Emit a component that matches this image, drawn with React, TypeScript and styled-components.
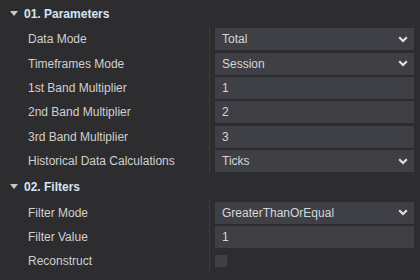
import React from "react";
import styled, { createGlobalStyle } from "styled-components";

const Global = createGlobalStyle`
  html, body { margin: 0; padding: 0; background: #2d2d30; }
  body { font-family: "Liberation Sans", Arial, sans-serif; font-size: 12px; color: #d2d2d2; }
`;

const Grid = styled.div`
  width: 420px;
  height: 280px;
  background: #2d2d30;
  overflow: hidden;
`;

const Header = styled.div`
  height: 27px;
  display: flex;
  align-items: center;
  padding-left: 10px;
  gap: 6px;
  font-weight: bold;
  color: #d6e4f4;
`;

const Caret = styled.svg`
  width: 8px;
  height: 5px;
  flex: none;
`;

const Rows = styled.div`
  display: flex;
  flex-direction: column;
`;

const Row = styled.div`
  height: 24.4px;
  display: grid;
  grid-template-columns: 209px 1px 1fr;
  align-items: center;
`;

const Label = styled.div`
  padding-left: 28px;
  color: #d0d0d0;
  white-space: nowrap;
`;

const Divider = styled.div`
  align-self: stretch;
  background: #3a3a3f;
`;

const Cell = styled.div`
  padding: 0 6px 0 5px;
  display: flex;
  align-items: center;
`;

const Field = styled.div`
  flex: 1;
  height: 22px;
  background: #3f3f46;
  display: flex;
  align-items: center;
  justify-content: space-between;
  padding: 0 6px 0 7px;
  color: #d6d6d6;
`;

const Chevron = styled.svg`
  width: 10px;
  height: 7px;
`;

const Check = styled.div`
  width: 12px;
  height: 12px;
  background: #3f3f46;
`;

type Item = { label: string; value?: string; kind: "select" | "text" | "check" };

const sections: { title: string; items: Item[] }[] = [
  {
    title: "01. Parameters",
    items: [
      { label: "Data Mode", value: "Total", kind: "select" },
      { label: "Timeframes Mode", value: "Session", kind: "select" },
      { label: "1st Band Multiplier", value: "1", kind: "text" },
      { label: "2nd Band Multiplier", value: "2", kind: "text" },
      { label: "3rd Band Multiplier", value: "3", kind: "text" },
      { label: "Historical Data Calculations", value: "Ticks", kind: "select" },
    ],
  },
  {
    title: "02. Filters",
    items: [
      { label: "Filter Mode", value: "GreaterThanOrEqual", kind: "select" },
      { label: "Filter Value", value: "1", kind: "text" },
      { label: "Reconstruct", kind: "check" },
    ],
  },
];

export default function App() {
  return (
    <Grid>
      <Global />
      {sections.map((s) => (
        <div key={s.title}>
          <Header>
            <Caret viewBox="0 0 8 5">
              <polygon points="0,0 8,0 4,5" fill="#c8c8c8" />
            </Caret>
            {s.title}
          </Header>
          <Rows>
            {s.items.map((it) => (
              <Row key={it.label}>
                <Label>{it.label}</Label>
                <Divider />
                <Cell>
                  {it.kind === "check" ? (
                    <Check />
                  ) : (
                    <Field>
                      <span>{it.value}</span>
                      {it.kind === "select" && (
                        <Chevron viewBox="0 0 10 7">
                          <polyline
                            points="1.2,1.2 5,5 8.8,1.2"
                            fill="none"
                            stroke="#e0e0e0"
                            strokeWidth="2.2"
                          />
                        </Chevron>
                      )}
                    </Field>
                  )}
                </Cell>
              </Row>
            ))}
          </Rows>
        </div>
      ))}
    </Grid>
  );
}
